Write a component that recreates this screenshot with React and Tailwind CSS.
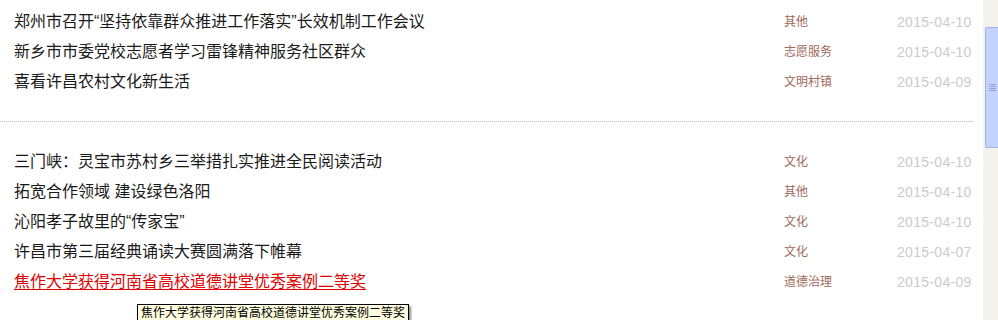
import React from 'react'

const topNews = [
  { title: '郑州市召开“坚持依靠群众推进工作落实”长效机制工作会议', cat: '其他', date: '2015-04-10' },
  { title: '新乡市市委党校志愿者学习雷锋精神服务社区群众', cat: '志愿服务', date: '2015-04-10' },
  { title: '喜看许昌农村文化新生活', cat: '文明村镇', date: '2015-04-09' }
]

const moreNews = [
  { title: '三门峡：灵宝市苏村乡三举措扎实推进全民阅读活动', cat: '文化', date: '2015-04-10' },
  { title: '拓宽合作领域 建设绿色洛阳', cat: '其他', date: '2015-04-10' },
  { title: '沁阳孝子故里的“传家宝”', cat: '文化', date: '2015-04-10' },
  { title: '许昌市第三届经典诵读大赛圆满落下帷幕', cat: '文化', date: '2015-04-07' },
  { title: '焦作大学获得河南省高校道德讲堂优秀案例二等奖', cat: '道德治理', date: '2015-04-09', hover: true }
]

const font = { fontFamily: '"Liberation Sans", "Noto Sans CJK SC", sans-serif' }

const NewsRow = ({ item }) => (
  <li className="flex h-[30px] items-center">
    <a
      href="#"
      className={`w-[784px] pl-[14px] text-[16px] leading-none ${
        item.hover ? 'text-[#e00000] underline underline-offset-2' : 'text-[#1a1a1a]'
      }`}
    >
      {item.title}
    </a>
    <span className="w-[113px] text-[12px] leading-none text-[#a0685a]">{item.cat}</span>
    <span className="w-[76px] text-[14px] leading-none tracking-[0.3px] text-[#cbcbcb]">{item.date}</span>
  </li>
)

const App = () => {
  return (
    <div className="relative flex h-[320px] w-[998px] overflow-hidden bg-white" style={font}>
      <div className="w-[983px] pt-[7px]">
        <ul>
          {topNews.map((item, i) => (
            <NewsRow key={i} item={item} />
          ))}
        </ul>
        <div className="mt-[24px] mb-[25px] w-[973px] border-t border-dotted border-[#bdbdbd]" />
        <ul>
          {moreNews.map((item, i) => (
            <NewsRow key={i} item={item} />
          ))}
        </ul>
      </div>

      {/* scrollbar */}
      <div className="flex w-[15px] justify-end bg-[#f5f3ed]">
        <div className="mt-[27px] flex h-[121px] w-[13px] items-center justify-center rounded-l-[2px] border border-r-0 border-[#9fb3e6] bg-[#c3d3fb]">
          <div className="flex w-[7px] flex-col gap-[1px]">
            <div className="h-px bg-[#8aa2de]" />
            <div className="h-px bg-[#8aa2de]" />
            <div className="h-px bg-[#8aa2de]" />
            <div className="h-px bg-[#8aa2de]" />
          </div>
        </div>
      </div>

      {/* tooltip */}
      <div className="absolute left-[137px] top-[304px] border border-black bg-[#ffffe1] px-[3px] pb-[2px] pt-[1px] text-[12px] leading-[14px] text-black shadow-[2px_2px_2px_rgba(0,0,0,0.45)]">
        焦作大学获得河南省高校道德讲堂优秀案例二等奖
      </div>
    </div>
  )
}

export default App
